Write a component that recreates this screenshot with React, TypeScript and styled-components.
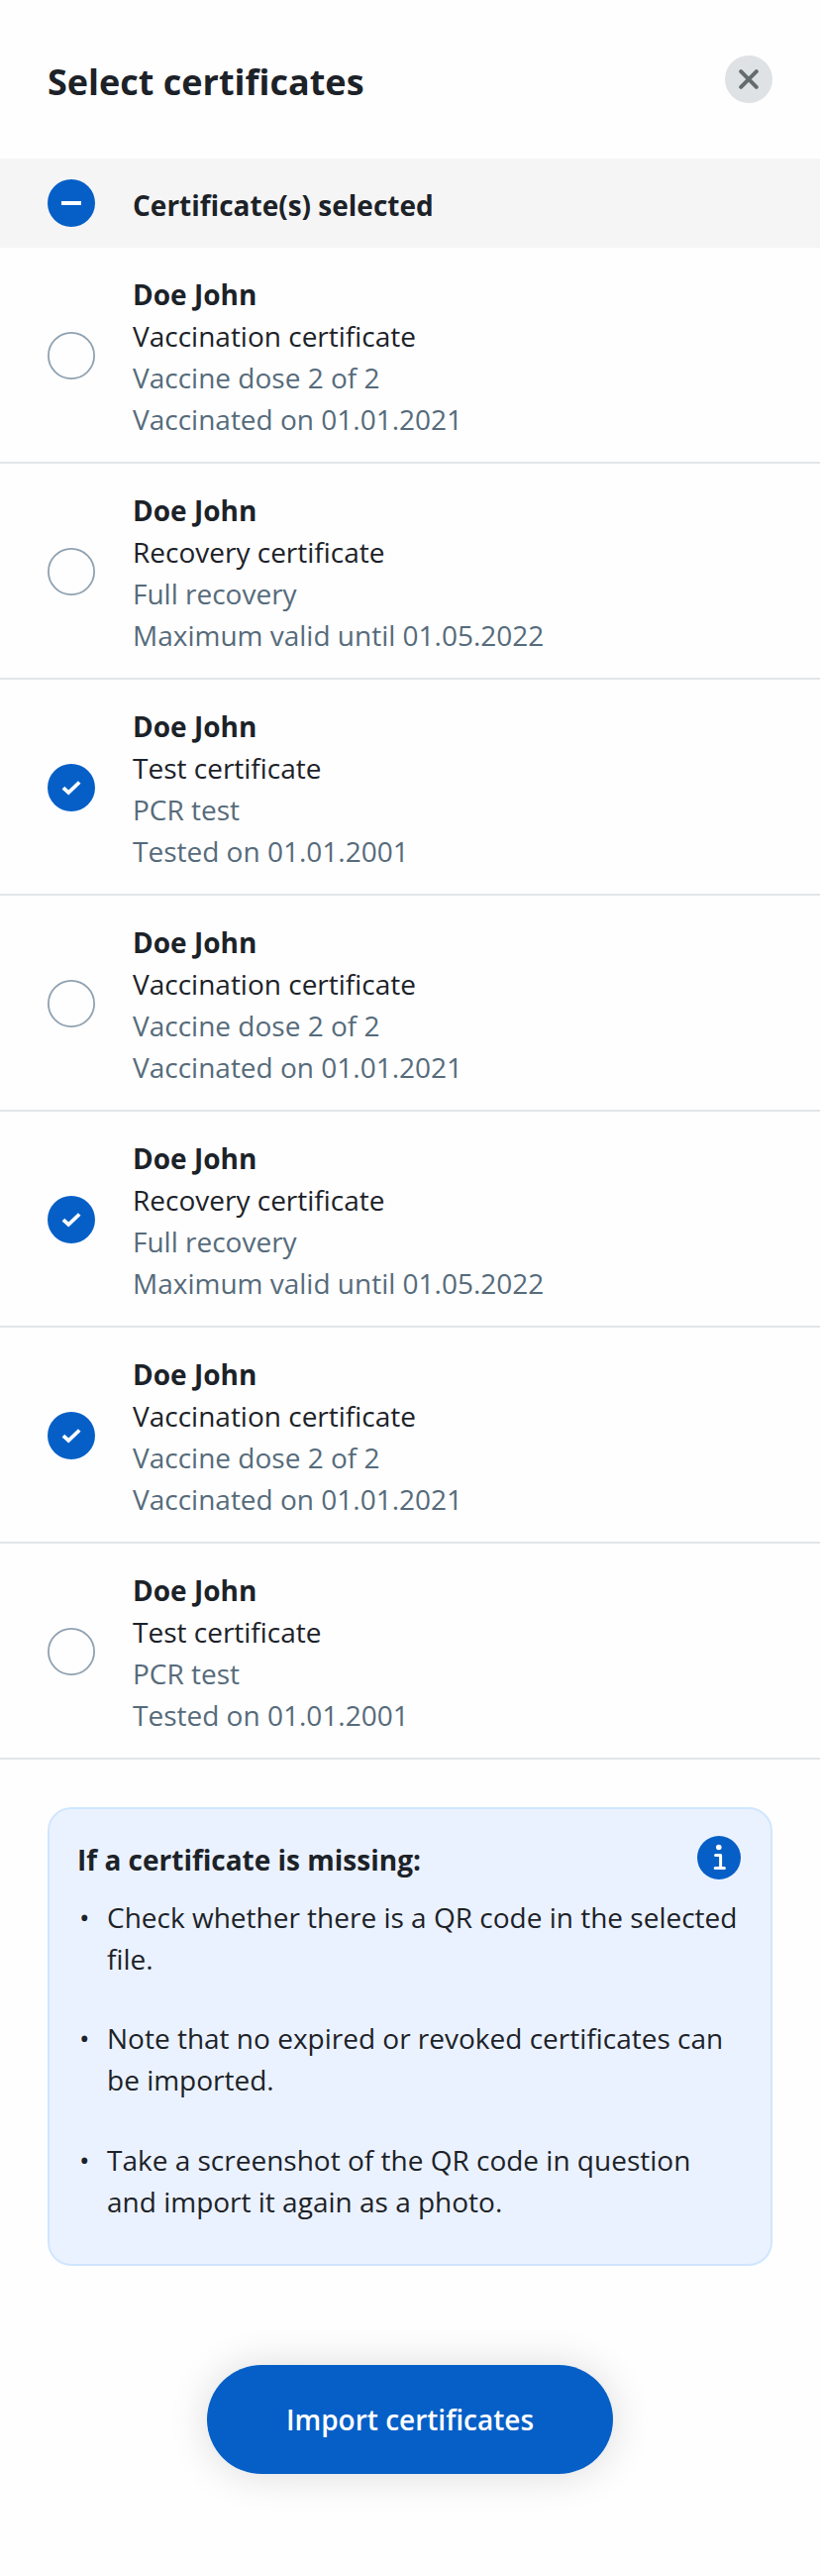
import React, { useState } from 'react';
import styled, { createGlobalStyle } from 'styled-components';

const GlobalStyle = createGlobalStyle`
  * { box-sizing: border-box; }
  body {
    margin: 0;
    background: #fefefe;
    color: #1c2228;
    font-family: "Open Sans", "Noto Sans", sans-serif;
    font-size: 28px;
    line-height: 42px;
  }
`;

const Page = styled.main`
  display: flex;
  flex-direction: column;
  width: 828px;
  min-height: 2600px;
`;

const Header = styled.header`
  display: flex;
  justify-content: space-between;
  height: 160px;
  padding: 56px 48px 0;
`;

const Title = styled.h1`
  margin: 0;
  font-size: 36px;
  line-height: 53px;
  font-weight: 700;
`;

const IconButton = styled.button`
  display: block;
  width: 48px;
  height: 48px;
  padding: 0;
  border: 0;
  background: none;
  cursor: pointer;

  svg { display: block; }
`;

const SummaryBar = styled.div`
  display: flex;
  align-items: flex-start;
  gap: 38px;
  height: 90px;
  padding: 21px 48px 0;
  background: #f5f5f5;
`;

const SummaryLabel = styled.div`
  padding-top: 5px;
  font-weight: 700;
`;

const List = styled.ul`
  margin: 0;
  padding: 0;
  list-style: none;
`;

const Row = styled.li`
  display: flex;
  align-items: center;
  gap: 38px;
  height: 218px;
  padding: 2px 48px 0;
  border-bottom: 2px solid #e2e6ea;
`;

const Details = styled.div`
  padding-top: 2px;
`;

const Line = styled.div<{ $tone?: 'name' | 'muted' }>`
  font-weight: ${({ $tone }) => ($tone === 'name' ? 700 : 400)};
  color: ${({ $tone }) => ($tone === 'muted' ? '#566b7b' : 'inherit')};
`;

const InfoBox = styled.section`
  height: 463px;
  margin: 48px 48px 0;
  padding: 27px 30px 0 28px;
  border: 2px solid #d0e6ff;
  border-radius: 24px;
  background: #ebf2ff;
`;

const InfoHeader = styled.div`
  display: flex;
  justify-content: space-between;

  svg { display: block; }
`;

const InfoTitle = styled.h2`
  margin: 0;
  padding-top: 3px;
  font-size: 28px;
  line-height: 42px;
  font-weight: 700;
`;

const Hints = styled.ul`
  display: flex;
  flex-direction: column;
  gap: 38.4px;
  margin: 16px 0 0;
  padding: 0;
  list-style: none;
`;

const Hint = styled.li`
  display: flex;
  white-space: pre-line;

  &::before {
    content: "•";
    box-sizing: border-box;
    flex: 0 0 30px;
    padding-left: 2px;
  }
`;

const Footer = styled.footer`
  display: flex;
  justify-content: center;
  padding-top: 100px;
`;

const ImportButton = styled.button`
  width: 410px;
  height: 110px;
  padding: 0;
  border: 0;
  border-radius: 55px;
  background: #065fc7;
  box-shadow: 0 1px 42px rgba(0, 0, 0, 0.14);
  color: #fff;
  font: 600 28px/42px "Open Sans", "Noto Sans", sans-serif;
  cursor: pointer;
`;

type Mark = 'none' | 'check' | 'minus';

function SelectionIcon({ mark }: { mark: Mark }) {
  if (mark === 'none') {
    return (
      <svg width="48" height="48" viewBox="0 0 48 48" fill="none">
        <circle cx="24" cy="24" r="23.1" stroke="#8fa2b2" strokeWidth="1.8" />
      </svg>
    );
  }
  return (
    <svg width="48" height="48" viewBox="0 0 48 48" fill="none">
      <circle cx="24" cy="24" r="24" fill="#065fc7" />
      {mark === 'check' ? (
        <path d="M15.9 24.2 21.2 29 32.2 18.5" stroke="#fff" strokeWidth="3.8" />
      ) : (
        <path d="M14 24h20" stroke="#fff" strokeWidth="4" />
      )}
    </svg>
  );
}

function CloseIcon() {
  return (
    <svg width="48" height="48" viewBox="0 0 48 48" fill="none">
      <circle cx="24" cy="24" r="24" fill="#dee2e5" />
      <path d="m16.2 16.2 15.6 15.6M31.8 16.2 16.2 31.8" stroke="#656c6c" strokeWidth="4" strokeLinecap="round" />
    </svg>
  );
}

function InfoIcon() {
  return (
    <svg width="44" height="44" viewBox="0 0 44 44" fill="none">
      <circle cx="22" cy="22" r="22" fill="#065fc7" />
      <circle cx="21.8" cy="11.5" r="2.8" fill="#fff" />
      <path d="M18.6 19.5h5v13M18.2 32.5h9.2" stroke="#fff" strokeWidth="3" strokeLinecap="round" strokeLinejoin="round" />
    </svg>
  );
}

const kinds = {
  vaccination: ['Vaccination certificate', 'Vaccine dose 2 of 2', 'Vaccinated on 01.01.2021'],
  recovery: ['Recovery certificate', 'Full recovery', 'Maximum valid until 01.05.2022'],
  test: ['Test certificate', 'PCR test', 'Tested on 01.01.2001'],
};

const certificates: (keyof typeof kinds)[] = [
  'vaccination',
  'recovery',
  'test',
  'vaccination',
  'recovery',
  'vaccination',
  'test',
];

const hints = [
  'Check whether there is a QR code in the selected\nfile.',
  'Note that no expired or revoked certificates can\nbe imported.',
  'Take a screenshot of the QR code in question\nand import it again as a photo.',
];

export default function App() {
  const [selected, setSelected] = useState<number[]>([2, 4, 5]);

  const toggle = (index: number) =>
    setSelected((current) =>
      current.includes(index) ? current.filter((i) => i !== index) : [...current, index],
    );

  const summary: Mark =
    selected.length === 0 ? 'none' : selected.length === certificates.length ? 'check' : 'minus';

  const toggleAll = () =>
    setSelected(selected.length === certificates.length ? [] : certificates.map((_, i) => i));

  return (
    <Page>
      <GlobalStyle />
      <Header>
        <Title>Select certificates</Title>
        <IconButton aria-label="Close">
          <CloseIcon />
        </IconButton>
      </Header>
      <SummaryBar>
        <IconButton aria-label="Toggle all" onClick={toggleAll}>
          <SelectionIcon mark={summary} />
        </IconButton>
        <SummaryLabel>Certificate(s) selected</SummaryLabel>
      </SummaryBar>
      <List>
        {certificates.map((kind, index) => {
          const [type, detail, date] = kinds[kind];
          return (
            <Row key={index}>
              <IconButton aria-label={type} onClick={() => toggle(index)}>
                <SelectionIcon mark={selected.includes(index) ? 'check' : 'none'} />
              </IconButton>
              <Details>
                <Line $tone="name">Doe John</Line>
                <Line>{type}</Line>
                <Line $tone="muted">{detail}</Line>
                <Line $tone="muted">{date}</Line>
              </Details>
            </Row>
          );
        })}
      </List>
      <InfoBox>
        <InfoHeader>
          <InfoTitle>If a certificate is missing:</InfoTitle>
          <InfoIcon />
        </InfoHeader>
        <Hints>
          {hints.map((hint) => (
            <Hint key={hint}>{hint}</Hint>
          ))}
        </Hints>
      </InfoBox>
      <Footer>
        <ImportButton>Import certificates</ImportButton>
      </Footer>
    </Page>
  );
}
